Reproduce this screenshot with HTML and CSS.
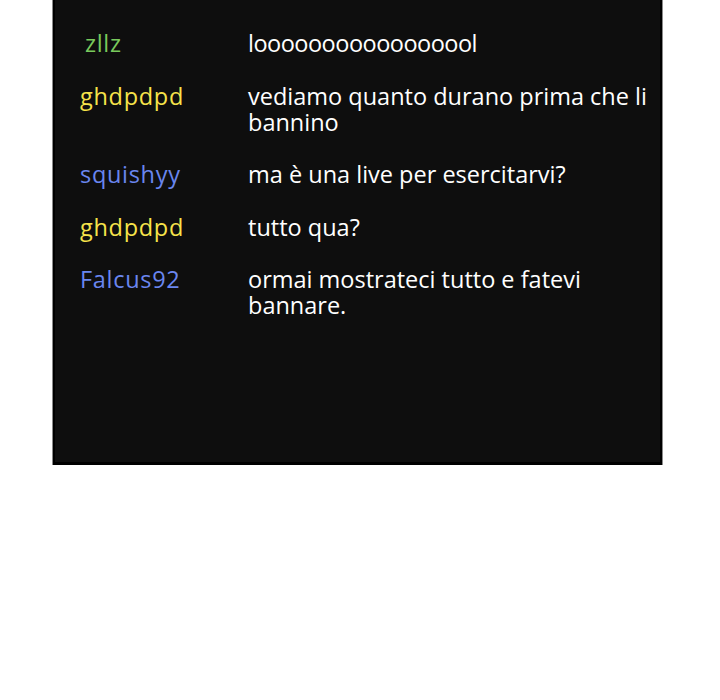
FILE: index.html
```html
<!DOCTYPE html>
<html lang="it">
<head>
<meta charset="utf-8">
<link rel="stylesheet" href="styles.css">
</head>
<body>
<div class="chat">
  <div class="row">
    <div class="name green shift">zllz</div>
    <div class="msg tight">looooooooooooooool</div>
  </div>
  <div class="row">
    <div class="name yellow">ghdpdpd</div>
    <div class="msg">vediamo quanto durano prima che li bannino</div>
  </div>
  <div class="row">
    <div class="name blue">squishyy</div>
    <div class="msg">ma è una live per esercitarvi?</div>
  </div>
  <div class="row">
    <div class="name yellow">ghdpdpd</div>
    <div class="msg">tutto qua?</div>
  </div>
  <div class="row">
    <div class="name blue">Falcus92</div>
    <div class="msg">ormai mostrateci tutto e fatevi bannare.</div>
  </div>
</div>
</body>
</html>
```
FILE: styles.css
```css
html, body {
  margin: 0;
  padding: 0;
  background: #ffffff;
}
.chat {
  margin-left: 53px;
  width: 605px;
  height: 432px;
  background: #0e0e0e;
  border: 2px solid #000;
  border-top: 0;
  border-bottom-width: 3px;
  outline: 1px solid #8a8a8a;
  padding: 30px 0 0 0;
  box-sizing: content-box;
  display: flex;
  flex-direction: column;
  gap: 26.5px;
  font-family: "Open Sans", "Noto Sans", sans-serif;
  font-size: 23.5px;
  line-height: 26px;
}
.row {
  display: grid;
  grid-template-columns: 193px 1fr;
}
.name {
  padding-left: 25px;
  letter-spacing: 0.7px;
}
.shift {
  padding-left: 30px;
}
.msg {
  color: #ffffff;
  padding-right: 8px;
}
.tight {
  letter-spacing: -0.5px;
}
.green { color: #79c95c; }
.yellow { color: #f7e34a; }
.blue { color: #6a86ef; }
```
